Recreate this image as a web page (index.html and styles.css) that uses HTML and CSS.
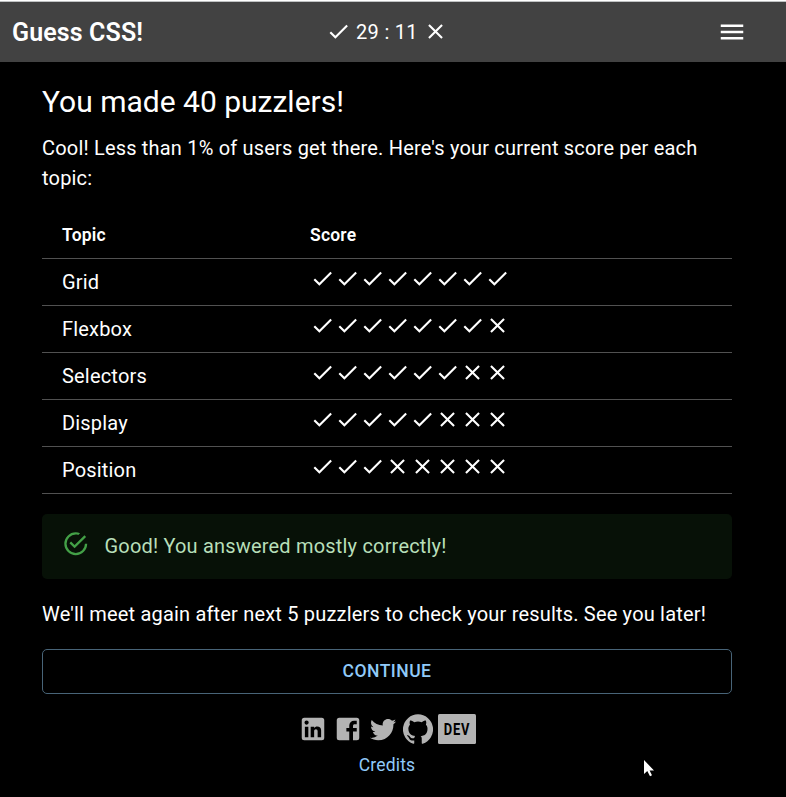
FILE: index.html
```html
<!DOCTYPE html>
<html lang="en">
<head>
<meta charset="utf-8">
<title>Guess CSS!</title>
<link rel="stylesheet" href="styles.css">
</head>
<body>
<svg class="defs" aria-hidden="true">
  <symbol id="check" viewBox="0 0 24 24"><path d="M9 16.17 4.83 12l-1.42 1.41L9 19 21 7l-1.41-1.41z"/></symbol>
  <symbol id="close" viewBox="0 0 24 24"><path d="M19 6.41 17.59 5 12 10.59 6.41 5 5 6.41 10.59 12 5 17.59 6.41 19 12 13.41 17.59 19 19 17.59 13.41 12z"/></symbol>
</svg>
<header class="bar">
  <div class="brand">Guess CSS!</div>
  <div class="tally"><svg class="icon"><use href="#check"/></svg><span>29 : 11</span><svg class="icon"><use href="#close"/></svg></div>
  <button class="menu" aria-label="Menu"><svg viewBox="0 0 24 24"><path d="M3 18h18v-2H3v2zm0-5h18v-2H3v2zm0-7v2h18V6H3z"/></svg></button>
</header>
<main class="content">
  <h1>You made 40 puzzlers!</h1>
  <p class="intro">Cool! Less than 1% of users get there. Here's your current score per each topic:</p>
  <table>
    <thead><tr><th class="topic">Topic</th><th>Score</th></tr></thead>
    <tbody id="scores"></tbody>
  </table>
  <div class="alert">
    <svg viewBox="0 0 24 24"><path d="M20,12A8,8 0 0,1 12,20A8,8 0 0,1 4,12A8,8 0 0,1 12,4C12.76,4 13.5,4.11 14.2,4.31L15.77,2.74C14.61,2.26 13.34,2 12,2A10,10 0 0,0 2,12A10,10 0 0,0 12,22A10,10 0 0,0 22,12M7.91,10.08L6.5,11.5L11,16L21,6L19.59,4.58L11,13.17L7.91,10.08Z"/></svg>
    <span>Good! You answered mostly correctly!</span>
  </div>
  <p class="next">We'll meet again after next 5 puzzlers to check your results. See you later!</p>
  <button class="continue">CONTINUE</button>
</main>
<footer>
  <div class="social">
    <svg viewBox="0 0 24 24"><path d="M19 3a2 2 0 0 1 2 2v14a2 2 0 0 1-2 2H5a2 2 0 0 1-2-2V5a2 2 0 0 1 2-2h14m-.5 15.5v-5.3a3.26 3.26 0 0 0-3.26-3.26c-.85 0-1.84.52-2.32 1.3v-1.11h-2.79v8.37h2.79v-4.93c0-.77.62-1.4 1.39-1.4a1.4 1.4 0 0 1 1.4 1.4v4.93h2.79M6.88 8.56a1.68 1.68 0 0 0 1.68-1.68c0-.93-.75-1.69-1.68-1.69a1.69 1.69 0 0 0-1.69 1.69c0 .93.76 1.68 1.69 1.68m1.39 9.94v-8.37H5.5v8.37h2.77z"/></svg>
    <svg viewBox="0 0 24 24"><path d="M19 3H5a2 2 0 0 0-2 2v14a2 2 0 0 0 2 2h8v-7h-2.3v-2.9H13V9.3C13 6.9 14.5 5.3 16.9 5.3h2.1v2.9h-1.7c-.8 0-1.3.5-1.3 1.3v1.6h3V14h-3v7h3a2 2 0 0 0 2-2V5a2 2 0 0 0-2-2z"/></svg>
    <svg viewBox="0 0 24 24"><path d="M22.46 6c-.77.35-1.6.58-2.46.69.88-.53 1.56-1.37 1.88-2.38-.83.5-1.75.85-2.72 1.05C18.37 4.5 17.26 4 16 4c-2.35 0-4.27 1.92-4.27 4.29 0 .34.04.67.11.98C8.28 9.09 5.11 7.38 3 4.79c-.37.63-.58 1.37-.58 2.15 0 1.49.75 2.81 1.91 3.56-.71 0-1.37-.2-1.95-.5v.03c0 2.08 1.48 3.82 3.44 4.21a4.22 4.22 0 0 1-1.93.07 4.28 4.28 0 0 0 4 2.98 8.521 8.521 0 0 1-5.33 1.84c-.34 0-.68-.02-1.02-.06C3.44 20.29 5.7 21 8.12 21 16 21 20.33 14.46 20.33 8.79c0-.19 0-.37-.01-.56.84-.6 1.56-1.36 2.14-2.23z"/></svg>
    <svg viewBox="0 0 24 24"><path d="M12 .3a12 12 0 0 0-3.8 23.4c.6.1.8-.3.8-.6v-2c-3.3.7-4-1.6-4-1.6-.6-1.4-1.4-1.8-1.4-1.8-1-.7.1-.7.1-.7 1.2 0 1.9 1.2 1.9 1.2 1 1.8 2.8 1.3 3.5 1 0-.8.4-1.3.7-1.6-2.7-.3-5.5-1.3-5.5-6 0-1.2.5-2.3 1.3-3.1-.2-.4-.6-1.6 0-3.2 0 0 1-.3 3.4 1.2a11.5 11.5 0 0 1 6 0c2.3-1.5 3.3-1.2 3.3-1.2.6 1.6.2 2.8 0 3.2.9.8 1.3 1.9 1.3 3.2 0 4.6-2.8 5.6-5.5 5.9.5.4.9 1 .9 2.2v3.3c0 .3.1.7.8.6A12 12 0 0 0 12 .3"/></svg>
    <svg class="dev" viewBox="0 0 38 30"><rect width="38" height="30" rx="1.5"/><text transform="translate(5.8 21) scale(.76 1)">DEV</text></svg>
  </div>
  <a class="credits">Credits</a>
</footer>
<svg class="cursor" viewBox="0 0 12 18"><path d="M0 0v14l3.3-3.1L6 16.2l2-.9-2.4-4.8H10z"/></svg>
<script src="script.js"></script>
</body>
</html>
```
FILE: styles.css
```css
* { box-sizing: border-box; }
body {
  margin: 0;
  min-height: 797px;
  background: #000;
  color: #fff;
  font: 400 20px/30px Roboto, sans-serif;
  letter-spacing: .00938em;
  overflow: hidden;
}
svg { display: block; fill: currentColor; flex: none; }
h1, p { margin: 0; font-weight: 400; }
button { font-family: inherit; padding: 0; cursor: pointer; background: none; }
.defs { display: none; }
.bar {
  display: grid;
  grid-template-columns: 1fr auto 1fr;
  align-items: center;
  height: 62px;
  padding: 0 24px 0 12px;
  background: #424242;
  border-top: 1px solid #fff;
  box-shadow: inset 0 1px #c0c2c3;
}
.brand { padding-top: 2px; font-size: 25px; font-weight: 600; letter-spacing: .12px; }
.tally { display: flex; align-items: center; gap: 5px; letter-spacing: .3px; }
.tally span { padding: 0 .5px; }
.icon { width: 25px; height: 25px; }
.menu { justify-self: end; margin-right: 15px; border: 0; color: #fff; }
.menu svg { width: 30px; height: 30px; }
.content { padding: 20px 54px 0 42px; }
h1 { font-size: 30px; line-height: 40px; letter-spacing: 0; }
.intro { margin-top: 11px; }
table { width: 690px; margin-top: 18px; border-collapse: collapse; table-layout: fixed; }
th, td { height: 47px; padding: 0 20px; border-bottom: 1px solid #515151; text-align: left; }
th { padding-top: 1px; font-size: 17.5px; font-weight: 600; letter-spacing: .2px; }
.topic { width: 248px; }
.marks { display: flex; margin-top: -6px; }
.alert {
  display: flex;
  align-items: center;
  height: 65px;
  margin-top: 20px;
  padding-left: 20px;
  border-radius: 5px;
  background: #071107;
  color: #b7dfb9;
}
.alert svg { width: 27.5px; height: 27.5px; margin: -5px 15px 0 0; color: #43a047; }
.next { margin-top: 20px; }
.continue {
  display: block;
  width: 100%;
  height: 45px;
  margin-top: 20px;
  border: 1px solid #486478;
  border-radius: 5px;
  color: #90caf9;
  font-size: 17.5px;
  font-weight: 500;
  letter-spacing: .5px;
}
footer { display: flex; flex-direction: column; align-items: center; width: 774px; margin-top: 20px; }
.social { display: flex; gap: 5px; color: #b3b3b3; }
.social svg { width: 30px; height: 30px; }
.social .dev { width: 38px; }
.dev text { fill: #000; font: 700 17px "Roboto", sans-serif; letter-spacing: 1px; }
.credits { margin-top: 6px; font-size: 17.5px; color: #90caf9; }
.cursor { position: absolute; left: 644px; top: 760px; width: 12px; height: 18px; }
```
FILE: script.js
```js
const scores = [["Grid", 8], ["Flexbox", 7], ["Selectors", 6], ["Display", 5], ["Position", 3]];
document.getElementById("scores").innerHTML = scores.map(([topic, right]) => {
  const marks = Array.from({ length: 8 }, (_, i) =>
    `<svg class="icon"><use href="#${i < right ? "check" : "close"}"/></svg>`).join("");
  return `<tr><td>${topic}</td><td><div class="marks">${marks}</div></td></tr>`;
}).join("");
```
